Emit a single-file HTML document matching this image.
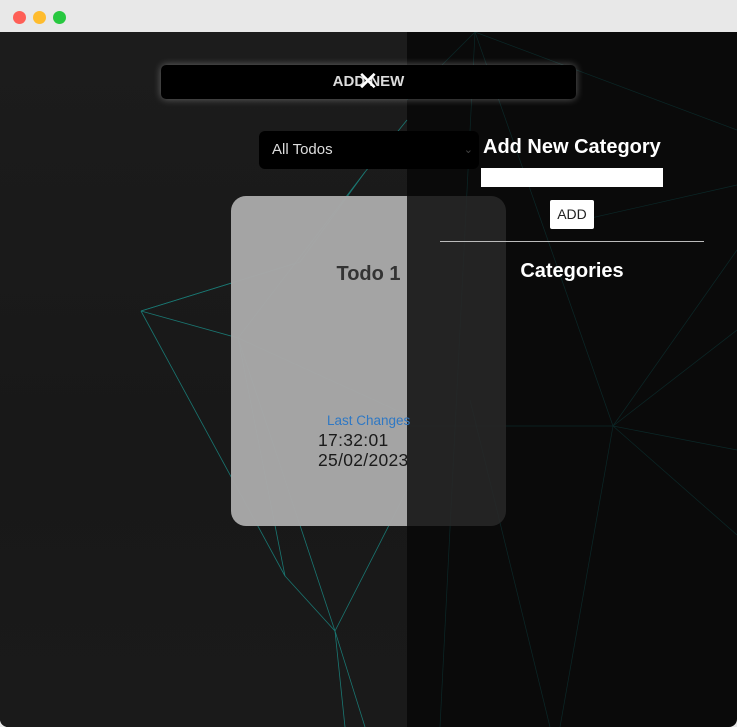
<!DOCTYPE html>
<html><head><style>
*{margin:0;padding:0;box-sizing:border-box}
body{width:737px;height:727px;overflow:hidden;background:#e8e8e8;font-family:"Liberation Sans",sans-serif;position:relative}
.bar{position:absolute;left:0;top:0;width:737px;height:32px;background:#e8e8e8}
.dot{position:absolute;top:11px;width:13px;height:13px;border-radius:50%}
.main{position:absolute;left:0;top:32px;width:737px;height:695px;background:#0a0a0a;overflow:hidden;border-radius:0 0 8px 8px}
.left{position:absolute;left:0;top:0;width:407px;height:695px;background:linear-gradient(180deg,#1c1c1c,#181818 60%,#1a1a1a)}
svg{position:absolute;left:0;top:0}
.abs{position:absolute}
</style></head><body>
<div class="bar">
<div class="dot" style="left:13px;background:#fe5f57"></div>
<div class="dot" style="left:33px;background:#febc2e"></div>
<div class="dot" style="left:53px;background:#28c840"></div>
</div>
<div class="main">
<div class="left"></div>
<svg width="737" height="695" viewBox="0 32 737 695">
<g stroke="#1a9f98" stroke-width="0.8" fill="none" opacity="0.7">
<path d="M141 311 L238 338 L285 576 L335 631 L345 727"/>
<path d="M141 311 L285 576"/>
<path d="M141 311 L300 262 L365 172 L407 120"/>
<path d="M141 311 L296 263"/>
<path d="M238 338 L407 415"/>
<path d="M238 338 L335 631 L407 490"/>
<path d="M238 338 L365 172"/>
<path d="M335 631 L365 727"/>
</g>
<g stroke="#0d3c3c" stroke-width="0.7" fill="none" opacity="0.6">
<path d="M475 32 L737 130"/>
<path d="M475 32 L440 727"/>
<path d="M475 32 L613 426 L737 250"/>
<path d="M613 426 L737 330"/>
<path d="M613 426 L737 450"/>
<path d="M613 426 L737 535"/>
<path d="M613 426 L560 727"/>
<path d="M613 426 L407 426"/>
<path d="M470 400 L550 727"/>
<path d="M737 185 L560 225"/>
<path d="M475 32 L407 100"/>
</g>
</svg>
<div class="abs" style="left:161px;top:33px;width:415px;height:34px;background:#000;border-radius:5px;box-shadow:0 0 8px rgba(255,255,255,0.35);color:#ddd;font-weight:bold;font-size:15px;text-align:center;line-height:34px">ADD NEW<span class="abs" style="left:196px;top:-1px;color:#fff;font-size:26px;font-weight:normal">✕</span></div>
<div class="abs" style="left:259px;top:99px;width:220px;height:38px;background:#000;border-radius:6px;color:#ddd;font-size:15px;line-height:38px;padding-left:13px">All Todos<span class="abs" style="right:6px;top:0;color:#444;font-size:11px">⌄</span></div>
<div class="abs" style="left:231px;top:164px;width:275px;height:330px;border-radius:15px;overflow:hidden;background:rgba(40,40,40,0.85)">
<div class="abs" style="left:0;top:0;width:176px;height:330px;background:rgba(182,182,182,0.88)"></div>
<div class="abs" style="left:0;top:67px;width:275px;text-align:center;font-size:20px;font-weight:bold;color:#333">Todo 1</div>
<div class="abs" style="left:96px;top:217px;font-size:13.5px;color:#2f78c4">Last Changes</div>
<div class="abs" style="left:87px;top:234px;font-size:17.5px;line-height:20px;color:#1a1a1a;letter-spacing:0.3px">17:32:01<br>25/02/2023</div>
</div>
<div class="abs" style="left:483px;top:104px;color:#fff;font-weight:bold;font-size:20px">Add New Category</div>
<div class="abs" style="left:481px;top:136px;width:182px;height:19px;background:#fff"></div>
<div class="abs" style="left:550px;top:168px;width:44px;height:29px;background:#fff;border-radius:2px;color:#222;font-size:14px;text-align:center;line-height:29px">ADD</div>
<div class="abs" style="left:440px;top:209px;width:264px;height:1px;background:#bbb"></div>
<div class="abs" style="left:440px;top:228px;width:264px;text-align:center;color:#fff;font-weight:bold;font-size:20px">Categories</div>
</div>
</body></html>
